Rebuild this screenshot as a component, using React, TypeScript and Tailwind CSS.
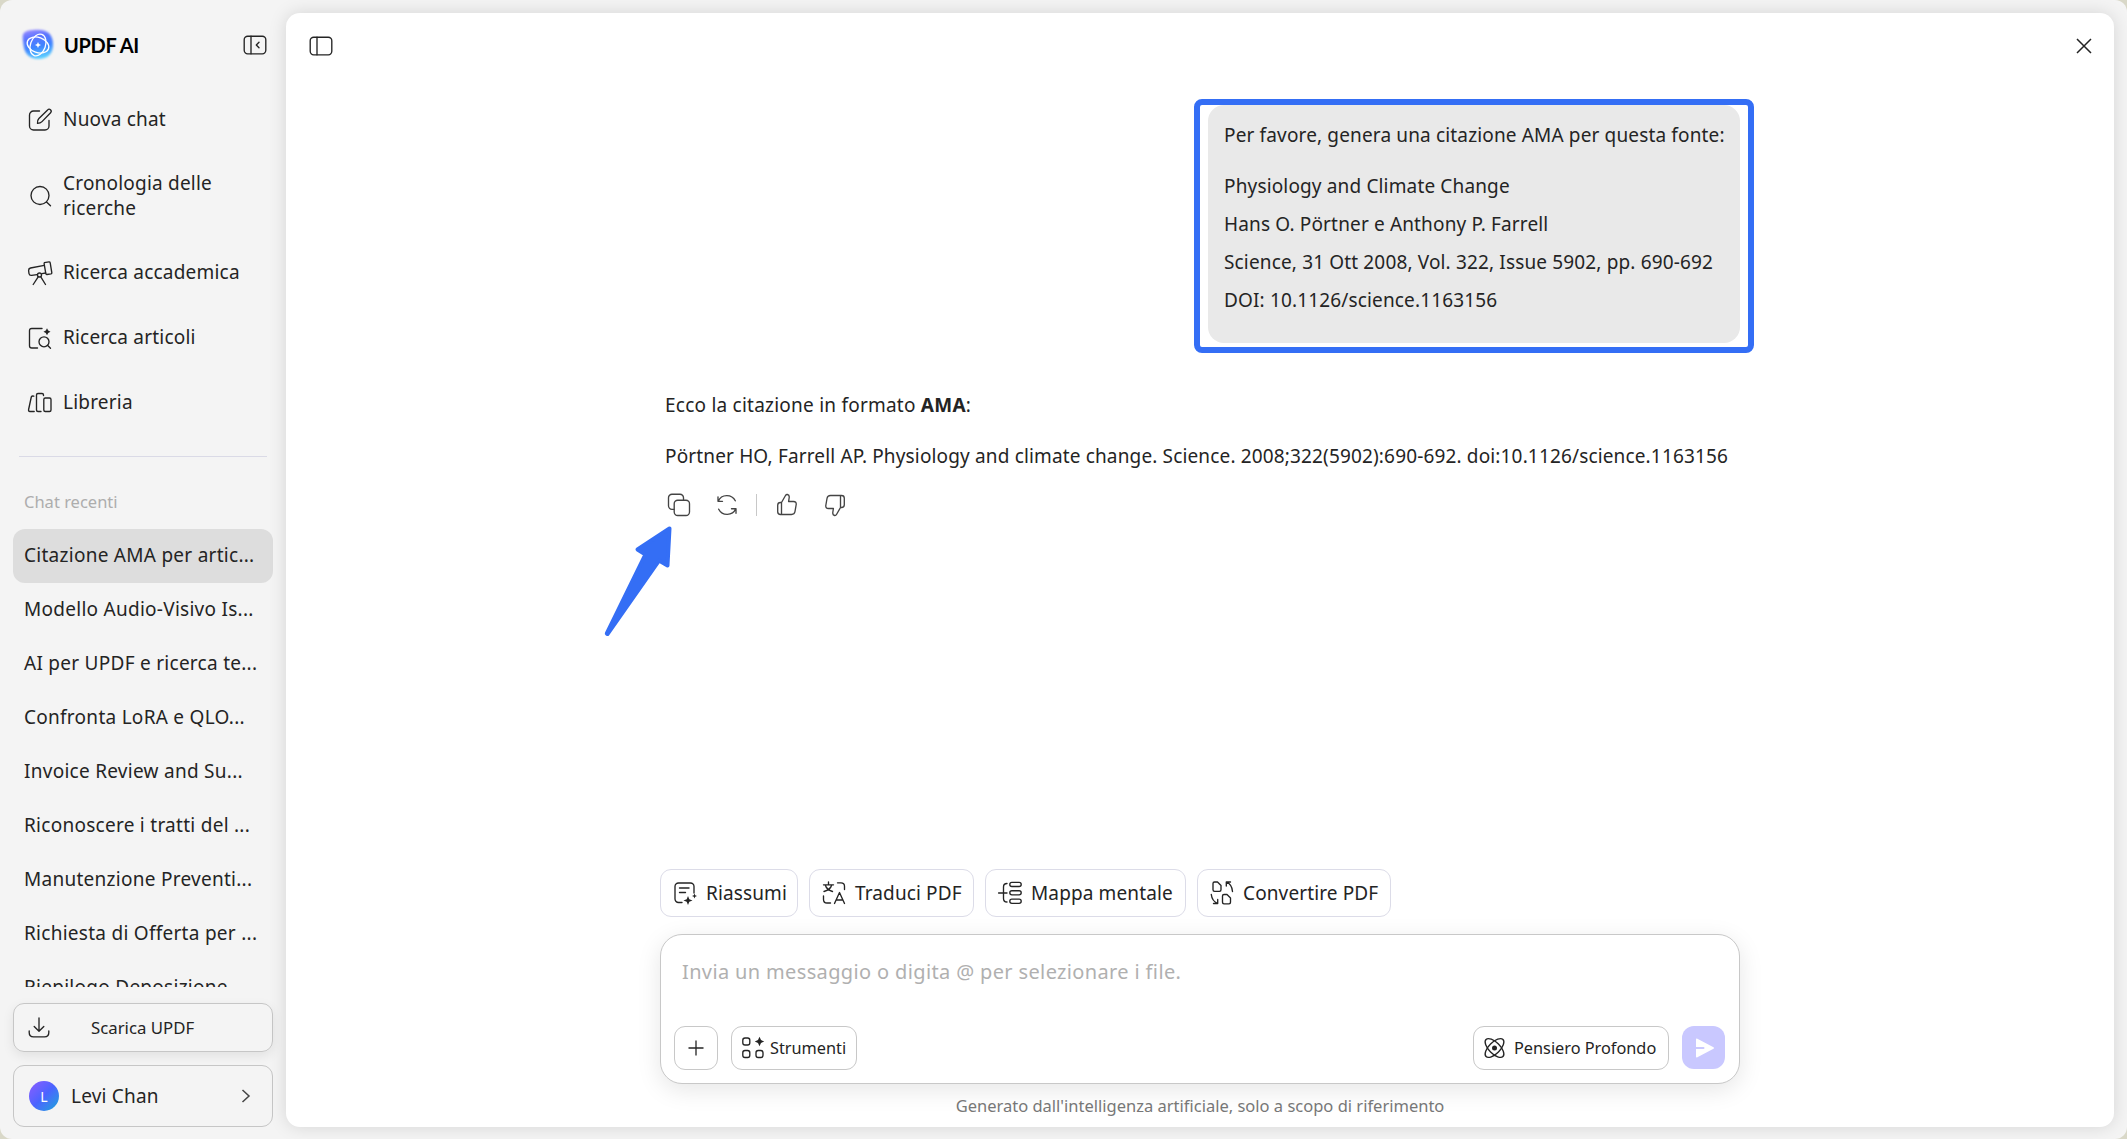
import React from 'react';

interface IconProps {
    className?: string;
}

const recentChats = [
    'Citazione AMA per artic...',
    'Modello Audio-Visivo Is...',
    'AI per UPDF e ricerca te...',
    'Confronta LoRA e QLO...',
    'Invoice Review and Su...',
    'Riconoscere i tratti del ...',
    'Manutenzione Preventi...',
    'Richiesta di Offerta per ...',
    'Riepilogo Deposizione',
];

const sourceLines = [
    'Physiology and Climate Change',
    'Hans O. Pörtner e Anthony P. Farrell',
    'Science, 31 Ott 2008, Vol. 322, Issue 5902, pp. 690-692',
    'DOI: 10.1126/science.1163156',
];

const Icon = ({ className = '', children }: IconProps & { children: React.ReactNode }) => (
    <svg
        viewBox="0 0 24 24"
        width="24"
        height="24"
        fill="none"
        stroke="currentColor"
        strokeWidth="1.35"
        strokeLinecap="round"
        strokeLinejoin="round"
        className={`shrink-0 overflow-visible ${className}`}
    >
        {children}
    </svg>
);

const Logo = () => (
    <svg viewBox="0 0 32 32" width="32" height="32" className="shrink-0 overflow-visible">
        <defs>
            <linearGradient id="logo-fill" x1="0.35" y1="0" x2="0.6" y2="1">
                <stop offset="0" stopColor="#8f86ff" />
                <stop offset="0.25" stopColor="#5a74ff" />
                <stop offset="0.6" stopColor="#3f86ff" />
                <stop offset="1" stopColor="#5fd6ff" />
            </linearGradient>
            <filter id="logo-soft" x="-20%" y="-20%" width="140%" height="140%">
                <feGaussianBlur stdDeviation="0.8" />
            </filter>
        </defs>
        <path
            d="M1.500 4.500C3.500 1.500 9 1 16 .8C26 .8 31 6 31 15.500C31 25 26 30 16 30C8 30 2.500 25 1.500 16C1 11 0 7 1.500 4.500Z"
            fill="url(#logo-fill)"
            filter="url(#logo-soft)"
        />
        <g fill="none" stroke="#fff" strokeWidth="1.3" strokeLinecap="round">
            <ellipse cx="16" cy="16" rx="11.200" ry="7.500" transform="rotate(20 16 16)" />
            <ellipse cx="16" cy="16" rx="11.200" ry="7.500" transform="rotate(110 16 16)" />
        </g>
        <path d="M16 13L16.900 15.100L19 16L16.900 16.900L16 19L15.100 16.900L13 16L15.100 15.100Z" fill="#fff" />
    </svg>
);

const CollapseIcon = () => (
    <Icon>
        <rect x="1.200" y="3.200" width="21.600" height="17.600" rx="3.500" />
        <path d="M8 3.200V20.800M16 9.200L13.300 12L16 14.800" />
    </Icon>
);

const PanelIcon = () => (
    <Icon>
        <rect x="1.200" y="3.200" width="21.600" height="17.600" rx="3.500" />
        <path d="M8 3.200V20.800" />
    </Icon>
);

const ComposeIcon = () => (
    <Icon>
        <path d="M11.500 3H5.500A4 4 0 0 0 1.500 7V18A4 4 0 0 0 5.500 22H17A4 4 0 0 0 21 18V12.500" />
        <path d="M9.500 15.300Q9 12.400 10.900 10.500L19.600 1.900A1.900 1.900 0 0 1 22.600 4.700L14 13.600Q12.400 15.300 9.500 15.300Z" />
    </Icon>
);

const SearchIcon = () => (
    <Icon>
        <circle cx="12" cy="11.500" r="9" />
        <path d="M18.500 18L22.500 21.800" />
    </Icon>
);

const TelescopeIcon = () => (
    <Icon>
        <path d="M16.300 1.700L21 .9Q22 .8 22.200 1.800L23.800 11.700Q23.900 12.700 23 12.900L18.900 13.500Q18 13.600 17.800 12.600L16.200 3.200Q16 1.900 16.300 1.700Z" />
        <path d="M16.300 4.300L2.500 7Q.5 7.500 .6 9.500L1 12.600Q1.500 14.700 3.600 14.400L9 13.600M14 12.600L17.700 12" />
        <circle cx="11.500" cy="14" r="2" />
        <path d="M10.200 15.800L5.200 23.500M12.800 15.800L17.500 23.500" />
    </Icon>
);

const ArticleSearchIcon = () => (
    <Icon>
        <path d="M14 2.500H3.800Q1.500 2.500 1.500 4.800V19.700Q1.500 22 3.800 22H9.500" />
        <circle cx="16" cy="15.800" r="5" />
        <path d="M19.700 19.400L22.500 22.200" />
        <path d="M19 2.200L20.200 4.500L22.500 5.700L20.200 6.900L19 9.200L17.800 6.900L15.500 5.700L17.800 4.500Z" fill="currentColor" stroke="none" />
    </Icon>
);

const LibraryIcon = () => (
    <Icon>
        <path d="M5.800 5.200L4.500 5Q3.500 5 3.300 6L.6 18.500Q.3 20.500 2 20.500H6.200" />
        <path d="M15.500 4.500V4Q15.500 2.500 14 2.500H10Q8.500 2.500 8.500 4V19Q8.500 20.500 10 20.500H13" />
        <rect x="15.800" y="7" width="7.200" height="13.500" rx="1.500" />
    </Icon>
);

const DownloadIcon = () => (
    <Icon>
        <path d="M12 2V15M7.200 10.500L12 15.300L16.800 10.500" />
        <path d="M2.200 15V16.500Q2.200 20.800 6.500 20.800H17.500Q21.800 20.800 21.800 16.500V15" />
    </Icon>
);

const CopyIcon = () => (
    <Icon>
        <path d="M7 16.300H5A3.500 3.500 0 0 1 1.500 12.800V4.700A3.500 3.500 0 0 1 5 1.200H13A3.500 3.500 0 0 1 16.500 4.700V7" />
        <rect x="7.200" y="7.200" width="15.300" height="15.300" rx="3.500" />
    </Icon>
);

const RefreshIcon = () => (
    <Icon>
        <path d="M3 3.800V8.300H7.500M3.200 8.200A9.500 9.500 0 0 1 20.300 7.800" />
        <path d="M21 20.200V15.700H16.500M20.800 15.800A9.500 9.500 0 0 1 3.700 16.200" />
    </Icon>
);

const ThumbIcon = ({ className = '' }: IconProps) => (
    <Icon className={className}>
        <path d="M6.500 9.500L10.500 2.500Q11.200 1.300 12.400 1.500Q14.500 2 14.200 4.500L13.600 8.500H18.500Q21.500 8.500 21.200 11.500L20 18.500Q19.500 21.500 16.500 21.500H5.500Q2.700 21.500 2.700 18.700V12.300Q2.700 9.500 5.500 9.500H6.500V21.500" />
    </Icon>
);

const SummaryIcon = () => (
    <Icon>
        <path d="M9 21.500H5.500A3.500 3.500 0 0 1 2 18V5.500A3.500 3.500 0 0 1 5.500 2H17.500A3.500 3.500 0 0 1 21 5.500V12" />
        <path d="M6.500 7H16M6.500 11.500H12.500" />
        <path d="M15 15L16.300 18.200L19.500 19.500L16.300 20.800L15 24L13.700 20.800L10.500 19.500L13.700 18.200Z" fill="currentColor" stroke="none" />
        <path d="M21.500 12.500L22.200 14.300L24 15L22.200 15.700L21.500 17.500L20.800 15.700L19 15L20.800 14.300Z" fill="currentColor" stroke="none" />
    </Icon>
);

const TranslateIcon = () => (
    <Icon>
        <path d="M1.500 3.800H11.500M6.500 1V3.800M3.300 4Q4.500 8.500 10.500 10.500M9.700 4Q8.500 8.500 2 10.500" />
        <path d="M15.500 1.800H19Q22.500 1.800 22.500 5.300V8.500M1.500 15V18.500Q1.500 22 5 22H8.500" />
        <path d="M12.500 22.500L17.500 11.500L22.500 22.500M14.200 19H20.800" />
    </Icon>
);

const MindMapIcon = () => (
    <Icon>
        <path d="M.6 12H9M9 2.500Q5.500 2.500 5.500 6V17.500Q5.500 21 9 21" />
        <rect x="11.800" y="1.300" width="11.400" height="4.200" rx="2.100" />
        <rect x="11.800" y="9.700" width="11.400" height="4.200" rx="2.100" />
        <rect x="11.800" y="18.100" width="11.400" height="4.200" rx="2.100" />
    </Icon>
);

const ConvertIcon = () => (
    <Icon>
        <path d="M4.500 1H7.500L11 4.500V8.800Q11 10.300 9.500 10.300H4.500Q3 10.300 3 8.800V2.500Q3 1 4.500 1Z" />
        <path d="M14 13.500H17L20.500 17V21.300Q20.500 22.800 19 22.800H14Q12.500 22.800 12.500 21.300V15Q12.500 13.500 14 13.500Z" />
        <path d="M20.500 1H16.300V5M16.500 1.200Q22 3.500 22.500 10.500" />
        <path d="M3.500 22.500H7.700V18.500M7.500 22.300Q2 20 1.300 13.500" />
    </Icon>
);

const ToolsIcon = () => (
    <Icon>
        <rect x="1.800" y="2" width="7" height="7" rx="2.200" />
        <rect x="1.800" y="14.500" width="7" height="7" rx="2.200" />
        <rect x="15" y="14.500" width="7" height="7" rx="2.200" />
        <path d="M18.500 .8L20 4L23.200 5.500L20 7L18.500 10.200L17 7L13.800 5.500L17 4Z" fill="currentColor" stroke="none" />
    </Icon>
);

const AtomIcon = () => (
    <Icon>
        <ellipse cx="11.500" cy="12" rx="12" ry="5.600" transform="rotate(45 11.500 12)" />
        <ellipse cx="11.500" cy="12" rx="12" ry="5.600" transform="rotate(-45 11.500 12)" />
        <circle cx="11.500" cy="12" r="2.500" fill="currentColor" stroke="none" />
    </Icon>
);

const navItems = [
    { label: 'Nuova chat', icon: <ComposeIcon /> },
    { label: 'Cronologia delle ricerche', icon: <SearchIcon />, tall: true },
    { label: 'Ricerca accademica', icon: <TelescopeIcon /> },
    { label: 'Ricerca articoli', icon: <ArticleSearchIcon /> },
    { label: 'Libreria', icon: <LibraryIcon /> },
];

const quickActions = [
    { label: 'Riassumi', icon: <SummaryIcon />, width: 'w-[138px]' },
    { label: 'Traduci PDF', icon: <TranslateIcon />, width: 'w-[165px]' },
    { label: 'Mappa mentale', icon: <MindMapIcon />, width: 'w-[201px]' },
    { label: 'Convertire PDF', icon: <ConvertIcon />, width: 'w-[194px]' },
];

const Sidebar = () => (
    <aside className="flex w-[286px] shrink-0 flex-col px-[13px] pt-[29px]">
        <div className="flex h-8 items-center pl-[9px] pr-[6px]">
            <Logo />
            <span className="ml-[10px] font-[Lato] text-[20px] font-bold tracking-[-0.350px] text-black">UPDF AI</span>
            <span className="ml-auto">
                <CollapseIcon />
            </span>
        </div>

        <nav className="mt-8 flex flex-col gap-3">
            {navItems.map((item) => (
                <div
                    key={item.label}
                    className={`flex items-center gap-[11px] pl-[15px] ${item.tall ? 'h-[76px] pr-10' : 'h-[53px] whitespace-nowrap'}`}
                >
                    {item.icon}
                    <span className="leading-[25px] tracking-[0.200px]">{item.label}</span>
                </div>
            ))}
        </nav>

        <div className="mx-[6px] mt-[27px] h-px bg-[#dadae6]" />

        <h2 className="mt-[33px] pl-[11px] text-[16.500px] leading-6 text-[#adadad]">Chat recenti</h2>
        <div className="mt-[15px] h-[458px] overflow-hidden">
            {recentChats.map((title, i) => (
                <div
                    key={title}
                    className={`flex h-[54px] items-center whitespace-nowrap rounded-xl pb-[1px] pl-[11px] tracking-[0.270px] ${i === 0 ? 'bg-[#ddd]' : ''}`}
                >
                    {title}
                </div>
            ))}
        </div>

        <button className="mt-4 flex h-[49px] shrink-0 items-center rounded-[11px] border border-[#c6c6c6] pl-[13px] text-[16.800px] shadow-[0_4px_12px_rgba(0,0,0,0.08)]">
            <DownloadIcon />
            <span className="ml-10">Scarica UPDF</span>
        </button>
        <button className="mt-[13px] flex h-[62px] shrink-0 items-center rounded-[11px] border border-[#c6c6c6] pl-[15px] pr-[21px]">
            <span className="flex size-[30px] items-center justify-center rounded-full bg-linear-to-br from-[#8a5cff] via-[#4a63ff] to-[#00a2d8] text-[14px] text-white">
                L
            </span>
            <span className="ml-3 tracking-[0.200px]">Levi Chan</span>
            <svg viewBox="0 0 10 14" width="10" height="14" className="ml-auto" fill="none" stroke="#444" strokeWidth="1.500">
                <path d="M1.500 1L8 7L1.500 13" />
            </svg>
        </button>
    </aside>
);

const Composer = () => (
    <div className="mt-[17px] flex h-[150px] flex-col justify-between rounded-[22px] border border-[#c8c8c8] bg-white px-[13px] pb-[13px] pt-[23px] shadow-[0_6px_24px_rgba(0,0,0,0.10)]">
        <p className="pl-2 text-[20px] leading-7 tracking-[0.360px] text-[#b0b0b0]">
            Invia un messaggio o digita @ per selezionare i file.
        </p>
        <div className="flex h-11 text-[16.300px]">
            <button className="flex w-11 items-center justify-center rounded-[11px] border border-[#c8c8c8]">
                <svg viewBox="0 0 16 16" width="16" height="16" stroke="currentColor" strokeWidth="1.300">
                    <path d="M8 .5V15.500M.5 8H15.500" />
                </svg>
            </button>
            <button className="ml-[13px] flex w-[126px] items-center rounded-[11px] border border-[#c8c8c8] pl-[9px]">
                <ToolsIcon />
                <span className="ml-[5px]">Strumenti</span>
            </button>
            <button className="ml-auto flex w-[196px] items-center rounded-[11px] border border-[#c8c8c8] pl-[9px]">
                <AtomIcon />
                <span className="ml-[7px]">Pensiero Profondo</span>
            </button>
            <button className="ml-[13px] mr-[1px] flex h-[43px] w-[43px] items-center justify-center rounded-xl bg-[#c9c8ff]">
                <svg viewBox="0 0 20 20" width="20" height="20" className="ml-[3px]" fill="#fff">
                    <path d="M1 1.600Q1 .2 2.400 .8L18.500 9.200Q19.800 10 18.500 10.800L2.400 19.200Q1 19.800 1 18.400V11H8.500Q9.500 10.800 9.500 10T8.500 9H1Z" />
                </svg>
            </button>
        </div>
    </div>
);

const Conversation = () => (
    <>
        <div className="relative mt-[26px] h-[238px] w-[532px] shrink-0 self-end rounded-2xl bg-[#e9e9e9] px-4 pt-[11px] leading-[38px] tracking-[0.150px]">
            {/* highlight frame */}
            <div className="absolute -bottom-[10px] -left-[14px] -right-[14px] -top-[6px] rounded-lg border-[6px] border-[#346ef5]" />
            <p className="mb-[13px] whitespace-nowrap">Per favore, genera una citazione AMA per questa fonte:</p>
            {sourceLines.map((line) => (
                <p key={line} className="whitespace-nowrap">{line}</p>
            ))}
        </div>

        <div className="mt-[43px] pl-[5px] leading-[38px] tracking-[0.150px]">
            <p className="tracking-[0.230px]">
                Ecco la citazione in formato <strong className="font-bold">AMA</strong>:
            </p>
            <p className="mt-[13px] whitespace-nowrap">
                Pörtner HO, Farrell AP. Physiology and climate change. Science. 2008;322(5902):690-692. doi:10.1126/science.1163156
            </p>
        </div>

        <div className="relative mt-[18px] flex h-6 items-center pl-[7px] text-[#444]">
            <CopyIcon />
            <span className="ml-6 flex"><RefreshIcon /></span>
            <span className="ml-[17px] h-[22px] w-px bg-[#c8c8c8]" />
            <span className="ml-[18px] flex"><ThumbIcon /></span>
            <span className="ml-6 flex"><ThumbIcon className="rotate-180" /></span>
            <svg
                viewBox="0 0 72 114"
                width="72"
                height="114"
                className="absolute -left-[58px] top-[31px]"
                fill="#346ef5"
                stroke="#346ef5"
                strokeWidth="4"
                strokeLinejoin="round"
            >
                <path d="M67.500 4.500L35.500 25.500L43.500 30.500L4.800 109.500L5.500 110L57 36.500L65.500 41.500Z" />
            </svg>
        </div>
    </>
);

export default function App() {
    return (
        <div className="h-[1139px] w-[2127px] overflow-hidden bg-[#d9d8c8] font-['Noto_Sans',sans-serif] text-[19px] text-[#242424]">
            <div className="flex h-full rounded-xl bg-[#f4f4f4]">
                <Sidebar />
                <main className="mt-[13px] flex h-[1114px] w-[1828px] flex-col rounded-[14px] bg-white shadow-[0_0_18px_rgba(0,0,0,0.13)]">
                    <header className="flex h-[66px] shrink-0 items-center justify-between pl-[23px] pr-[22px]">
                        <PanelIcon />
                        <svg viewBox="0 0 16 16" width="16" height="16" fill="none" stroke="currentColor" strokeWidth="1.500">
                            <path d="M1 1L15 15M15 1L1 15" />
                        </svg>
                    </header>
                    <section className="ml-[374px] flex w-[1080px] flex-1 flex-col pb-[9px]">
                        <Conversation />
                        <div className="mt-auto flex gap-[11px]">
                            {quickActions.map((action) => (
                                <button
                                    key={action.label}
                                    className={`flex h-12 items-center gap-[9px] whitespace-nowrap rounded-[11px] border border-[#dcdce8] pl-3 tracking-[0.120px] ${action.width}`}
                                >
                                    {action.icon}
                                    {action.label}
                                </button>
                            ))}
                        </div>
                        <Composer />
                        <p className="mt-[10px] text-center text-[16.500px] leading-6 text-[#777]">
                            Generato dall'intelligenza artificiale, solo a scopo di riferimento
                        </p>
                    </section>
                </main>
            </div>
        </div>
    );
}
